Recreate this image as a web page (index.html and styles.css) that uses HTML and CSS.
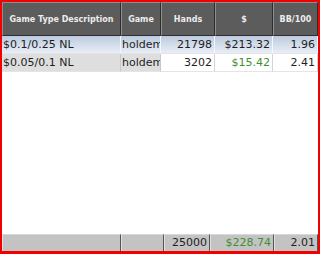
FILE: index.html
```html
<!DOCTYPE html>
<html>
<head>
<meta charset="utf-8">
<link rel="stylesheet" href="styles.css">
</head>
<body>
<div class="frame">
  <div class="grid head">
    <div class="th">Game Type Description</div>
    <div class="th">Game</div>
    <div class="th">Hands</div>
    <div class="th">$</div>
    <div class="th">BB/100</div>
  </div>
  <div class="grid row sel">
    <div class="td">$0.1/0.25 NL</div>
    <div class="td">holdem</div>
    <div class="td num">21798</div>
    <div class="td num">$213.32</div>
    <div class="td num">1.96</div>
  </div>
  <div class="grid row alt">
    <div class="td grey">$0.05/0.1 NL</div>
    <div class="td grey">holdem</div>
    <div class="td num">3202</div>
    <div class="td num green">$15.42</div>
    <div class="td num">2.41</div>
  </div>
  <div class="spacer"></div>
  <div class="foot">
    <div class="tf"></div>
    <div class="tf"></div>
    <div class="tf num">25000</div>
    <div class="tf num green">$228.74</div>
    <div class="tf num">2.01</div>
  </div>
</div>
</body>
</html>
```
FILE: styles.css
```css
html, body {
  margin: 0;
  padding: 0;
  background: #fff;
}
.frame {
  width: 316px;
  height: 249px;
  border-style: solid;
  border-color: #f10000;
  border-width: 2px 2px 3px 2px;
  display: flex;
  flex-direction: column;
  font-family: "DejaVu Sans", sans-serif;
  overflow: hidden;
}
.grid {
  display: grid;
  grid-template-columns: 119px 40px 54px 58px 45px;
}
.head {
  height: 34px;
  background: #5c5c5c;
}
.th {
  box-sizing: border-box;
  border-top: 1px solid #8e8e8e;
  border-left: 1px solid #8e8e8e;
  border-right: 1px solid #2e2e2e;
  border-bottom: 1px solid #2e2e2e;
  color: #ececec;
  font-weight: bold;
  font-size: 8px;
  display: flex;
  align-items: center;
  justify-content: center;
  white-space: nowrap;
  overflow: hidden;
}
.row {
  height: 18px;
}
.td {
  box-sizing: border-box;
  height: 18px;
  font-size: 11px;
  line-height: 17px;
  color: #1e1e1e;
  padding: 0 2px 0 1px;
  white-space: nowrap;
  overflow: hidden;
  border-right: 1px solid #d4d4d4;
  border-bottom: 1px solid #e4e4e4;
}
.sel .td {
  background: linear-gradient(#bccadf, #e9eef6);
  border-right-color: #f2f5fa;
}
.alt .td {
  background: #fff;
}
.alt .td.grey {
  background: #dedede;
  border-right-color: #c8c8c8;
}
.num {
  text-align: right;
}
.green {
  color: #3f8f2e;
}
.spacer {
  flex: 1;
}
.foot {
  height: 17px;
  display: grid;
  grid-template-columns: 119px 43px 46px 64px 44px;
  background: #c3c3c3;
}
.tf {
  box-sizing: border-box;
  font-size: 11px;
  line-height: 16px;
  color: #1e1e1e;
  padding: 0 2px 0 1px;
  border-top: 1px solid #d8d8d8;
  border-left: 1px solid #e0e0e0;
  border-right: 1px solid #555;
  white-space: nowrap;
  overflow: hidden;
}
.tf.green {
  color: #3f8f2e;
}
```
